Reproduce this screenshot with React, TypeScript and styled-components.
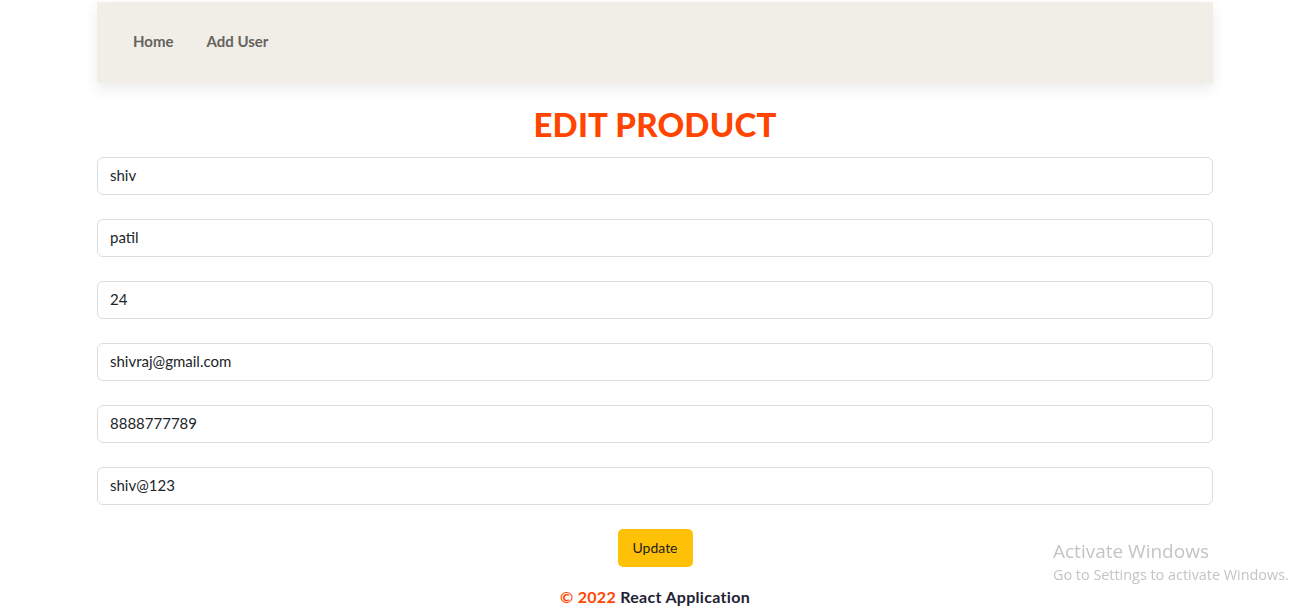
import React from "react";
import styled, { createGlobalStyle } from "styled-components";

const Global = createGlobalStyle`
  * { box-sizing: border-box; }
  body { margin: 0; background: #fff; font-family: Lato, "Noto Sans", sans-serif; color: #212529; }
`;

const Container = styled.div`
  width: 1116px;
  margin: 0 0 0 calc(50% - 557px);
`;

const Nav = styled.nav`
  margin-top: 2px;
  height: 81px;
  background: #f0eee7;
  box-shadow: 0 6px 14px rgba(0, 0, 0, 0.08);
  display: flex;
  align-items: center;
  padding: 0 0 4px 36px;
  gap: 33px;
`;

const NavLink = styled.a`
  font-size: 15px;
  font-weight: 700;
  color: #66635e;
  text-decoration: none;
`;

const Title = styled.h1`
  margin: 21px 0 13px;
  text-align: center;
  font-size: 33px;
  font-weight: 900;
  color: #ff4500;
  line-height: 40px;
  letter-spacing: 0.2px;
`;

const Form = styled.form`
  display: flex;
  flex-direction: column;
  gap: 24px;
`;

const Input = styled.input`
  width: 100%;
  height: 38px;
  border: 1px solid #dcdce2;
  border-radius: 6px;
  padding: 0 12px 3px;
  font-family: Lato, "Noto Sans", sans-serif;
  font-size: 15px;
  color: #212529;
  outline: none;
`;

const Actions = styled.div`
  display: flex;
  justify-content: center;
`;

const Button = styled.button`
  width: 75px;
  height: 38px;
  background: #ffc107;
  border: none;
  border-radius: 5px;
  padding-bottom: 3px;
  font-family: Lato, "Noto Sans", sans-serif;
  font-size: 14px;
  color: #1d1d1d;
`;

const Footer = styled.footer`
  margin-top: 20px;
  text-align: center;
  font-size: 16px;
  font-weight: 700;
  color: #1f2233;
  letter-spacing: 0.3px;
`;

const Accent = styled.span`
  color: #ff4500;
`;

const Watermark = styled.div`
  position: fixed;
  left: 1053px;
  top: 540px;
  font-family: "Open Sans", "Noto Sans", sans-serif;
  color: #c4c4c4;
  line-height: 1.2;
`;

const WmTitle = styled.div`
  font-size: 19px;
`;

const WmSub = styled.div`
  font-size: 14.4px;
  margin-top: 3px;
`;

const values = ["shiv", "patil", "24", "shivraj@gmail.com", "8888777789", "shiv@123"];

export default function App() {
  return (
    <>
      <Global />
      <Container>
        <Nav>
          <NavLink href="#">Home</NavLink>
          <NavLink href="#">Add User</NavLink>
        </Nav>
        <Title>EDIT PRODUCT</Title>
        <Form onSubmit={(e) => e.preventDefault()}>
          {values.map((v, i) => (
            <Input key={i} defaultValue={v} />
          ))}
          <Actions>
            <Button type="submit">Update</Button>
          </Actions>
        </Form>
        <Footer>
          <Accent>© 2022</Accent> React Application
        </Footer>
      </Container>
      <Watermark>
        <WmTitle>Activate Windows</WmTitle>
        <WmSub>Go to Settings to activate Windows.</WmSub>
      </Watermark>
    </>
  );
}
